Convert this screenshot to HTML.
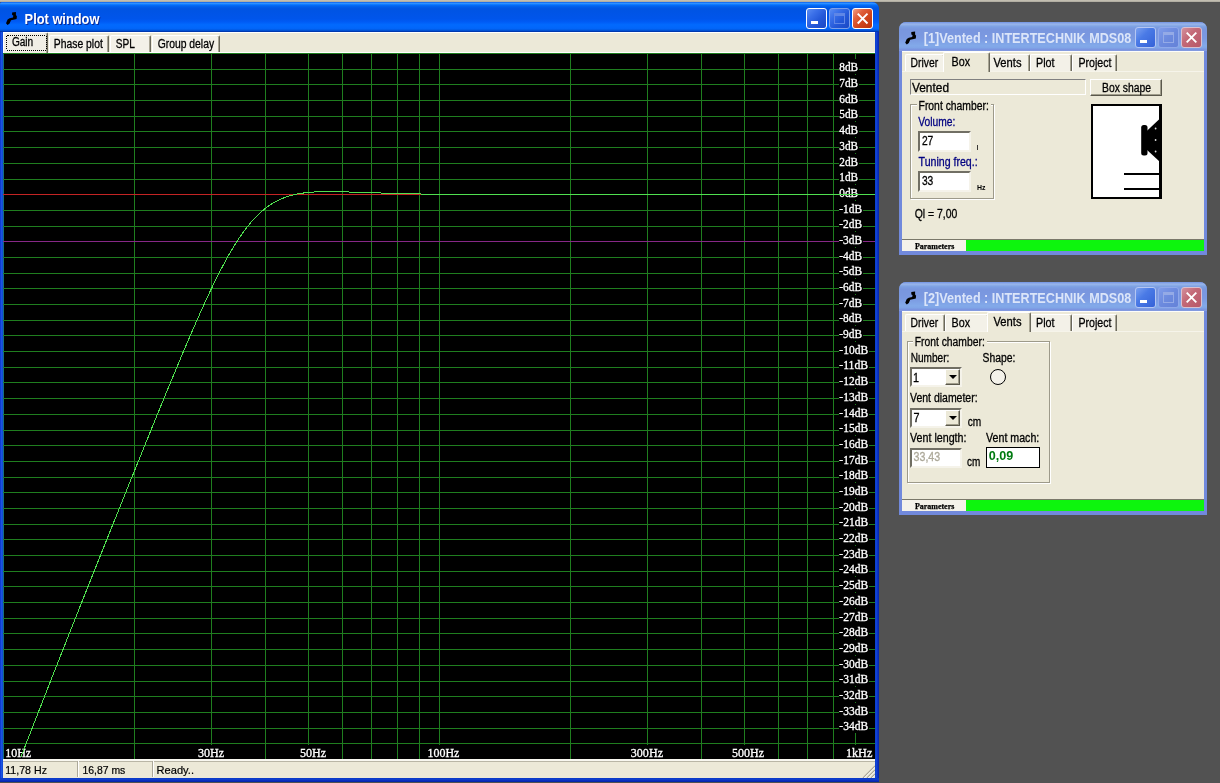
<!DOCTYPE html>
<html><head><meta charset="utf-8"><title>Plot window</title>
<style>
html,body{margin:0;padding:0;}
body{width:1220px;height:783px;overflow:hidden;background:#525252;position:relative;font-family:'Liberation Sans',sans-serif;font-size:12px;}
div{position:absolute;box-sizing:border-box;}
svg{position:absolute;left:0;top:0;will-change:transform;}
.topstrip{left:0;top:0;width:1220px;height:2px;background:linear-gradient(to bottom,#c9c5b8,#aaa79c);}
.win{background:#ece9d8;}
.tb{left:0;top:0;width:100%;border-radius:7px 7px 0 0;}
.act .tb{background:linear-gradient(to bottom,#0058ee 0%,#3593ff 4%,#288eff 6%,#127dff 8%,#036ffc 10%,#0262ee 14%,#0057e5 20%,#0054e3 24%,#0055eb 56%,#005bf5 66%,#026afe 76%,#0266fa 88%,#0058e0 94%,#0044c0 97%,#002a9a 100%);}
.ina .tb{background:linear-gradient(to bottom,#7697e7 0%,#7e9ee3 3%,#94afe8 6%,#97b4e9 8%,#82a5e4 14%,#7c9fe2 17%,#7996de 25%,#7b99e1 56%,#82a9e9 81%,#80a5e7 89%,#7b96e1 94%,#7a93df 97%,#8ea2e0 100%);}
.btn{width:21px;height:21px;border-radius:3px;border:1px solid #fff;}
.act .bmin,.act .bmax{background:radial-gradient(circle at 90% 90%,#0054e9 0%,#2263d5 55%,#4479e4 70%,#a3bbec 90%,#fff 100%);background:linear-gradient(135deg,#5b8df2 0%,#3a6fe8 30%,#2458d8 60%,#1b48c4 100%);}
.act .bclose{background:linear-gradient(135deg,#f0a088 0%,#e0603c 30%,#d0441c 60%,#b8320c 100%);}
.ina .bmin{background:linear-gradient(135deg,#7ba0f0 0%,#4a7ae6 40%,#3562d8 100%);border-color:#b4c6f3;}
.ina .bmax{background:linear-gradient(135deg,#7f9cea 0%,#6c8ade 50%,#6482d8 100%);border-color:#8fa8ea;}
.ina .bclose{background:linear-gradient(135deg,#d4909c 0%,#c46a78 40%,#b85868 100%);border-color:#d8c0d0;}
.tab{background:#f3f1e8;border-top:1px solid #fff;border-left:1px solid #fff;border-right:1px solid #6a685c;box-shadow:inset -1px 0 0 #a9a695;border-radius:2px 2px 0 0;}
.sunk{border:1px solid;border-color:#808080 #fff #fff #808080;}
.edit{background:#fff;border:2px solid;border-color:#716f64 #f5f3ea #f5f3ea #716f64;}
.grp{border:1px solid #9d9a8a;box-shadow:1px 1px 0 #fff, inset 1px 1px 0 #fff;}
</style></head><body>
<div class="topstrip"></div>

<div class="win act" style="left:0;top:2px;width:879px;height:780px;border-radius:2px 7px 0 0;background:#0b3fdb;">
<div class="tb" style="height:30px;border-radius:2px 7px 0 0;"></div>
<div style="left:0;top:30px;width:3px;height:750px;background:linear-gradient(to right,#0a2fd0,#1a55e0,#0f44d2);"></div>
<div style="left:875px;top:30px;width:4px;height:750px;background:linear-gradient(to right,#0c3ccc,#1046d6,#0a30c4,#0626a8);"></div>
<div style="left:0;top:776px;width:879px;height:4px;background:linear-gradient(to bottom,#0b38c6,#0d3ecc,#092cbc,#0524a2);"></div>
<div style="left:3px;top:30px;width:872px;height:746px;background:#ece9d8;"></div>
<div class="btn bmin" style="left:806px;top:6px;"></div>
<div class="btn bmax" style="left:829px;top:6px;border-color:#7d9fe8;"></div>
<div class="btn bclose" style="left:852px;top:6px;"></div>
<div style="left:3px;top:30px;width:872px;height:1px;background:#fff;"></div>
<div class="tab" style="left:3px;top:30px;width:45px;height:21px;background:#f1efe6;"></div>
<div class="tab" style="left:49px;top:33px;width:60px;height:18px;"></div>
<div class="tab" style="left:110px;top:33px;width:41px;height:18px;"></div>
<div class="tab" style="left:152px;top:33px;width:68px;height:18px;"></div>
<div style="left:48px;top:50px;width:827px;height:1px;background:#fff;"></div>
<div style="left:3px;top:51px;width:872px;height:706px;background:#000;"></div>
<div style="left:3px;top:757px;width:872px;height:19px;background:#ece9d8;border-top:2px solid #f8f7f0;"></div>
<div style="left:3px;top:759px;width:872px;height:1px;background:#b9b6a6;"></div>
<svg width="14" height="14" style="left:861px;top:762px;" viewBox="0 0 14 14"><path d="M2,14 L14,2 M6,14 L14,6 M10,14 L14,10" stroke="#aca899" stroke-width="1.3" fill="none"/><path d="M3.2,14 L14,3.2 M7.2,14 L14,7.2 M11.2,14 L14,11.2" stroke="#fff" stroke-width="0.8" fill="none"/></svg>
<div style="left:77px;top:759px;width:2px;height:16px;border-left:1px solid #aca899;border-right:1px solid #fff;"></div>
<div style="left:152px;top:759px;width:2px;height:16px;border-left:1px solid #aca899;border-right:1px solid #fff;"></div>
</div>
<svg width="1220" height="783" viewBox="0 0 1220 783" shape-rendering="crispEdges">
<rect x="3" y="53" width="1" height="706" fill="#16707c"/>
<rect x="134" y="53" width="1" height="706" fill="#1f7e1f"/>
<rect x="211" y="53" width="1" height="706" fill="#1f7e1f"/>
<rect x="265" y="53" width="1" height="706" fill="#1f7e1f"/>
<rect x="308" y="53" width="1" height="706" fill="#1f7e1f"/>
<rect x="342" y="53" width="1" height="706" fill="#1f7e1f"/>
<rect x="371" y="53" width="1" height="706" fill="#1f7e1f"/>
<rect x="397" y="53" width="1" height="706" fill="#1f7e1f"/>
<rect x="419" y="53" width="1" height="706" fill="#1f7e1f"/>
<rect x="439" y="53" width="1" height="706" fill="#1f7e1f"/>
<rect x="570" y="53" width="1" height="706" fill="#1f7e1f"/>
<rect x="647" y="53" width="1" height="706" fill="#1f7e1f"/>
<rect x="701" y="53" width="1" height="706" fill="#1f7e1f"/>
<rect x="744" y="53" width="1" height="706" fill="#1f7e1f"/>
<rect x="778" y="53" width="1" height="706" fill="#1f7e1f"/>
<rect x="807" y="53" width="1" height="706" fill="#1f7e1f"/>
<rect x="833" y="53" width="1" height="706" fill="#1f7e1f"/>
<rect x="855" y="53" width="1" height="706" fill="#1f7e1f"/>
<rect x="3" y="53" width="872" height="1" fill="#1f7e1f"/>
<rect x="3" y="69" width="872" height="1" fill="#1f7e1f"/>
<rect x="3" y="84" width="872" height="1" fill="#1f7e1f"/>
<rect x="3" y="100" width="872" height="1" fill="#1f7e1f"/>
<rect x="3" y="116" width="872" height="1" fill="#1f7e1f"/>
<rect x="3" y="131" width="872" height="1" fill="#1f7e1f"/>
<rect x="3" y="147" width="872" height="1" fill="#1f7e1f"/>
<rect x="3" y="163" width="872" height="1" fill="#1f7e1f"/>
<rect x="3" y="179" width="872" height="1" fill="#1f7e1f"/>
<rect x="3" y="194" width="872" height="1" fill="#c42424"/>
<rect x="3" y="210" width="872" height="1" fill="#1f7e1f"/>
<rect x="3" y="226" width="872" height="1" fill="#1f7e1f"/>
<rect x="3" y="241" width="872" height="1" fill="#872887"/>
<rect x="3" y="257" width="872" height="1" fill="#1f7e1f"/>
<rect x="3" y="273" width="872" height="1" fill="#1f7e1f"/>
<rect x="3" y="288" width="872" height="1" fill="#1f7e1f"/>
<rect x="3" y="304" width="872" height="1" fill="#1f7e1f"/>
<rect x="3" y="320" width="872" height="1" fill="#1f7e1f"/>
<rect x="3" y="335" width="872" height="1" fill="#1f7e1f"/>
<rect x="3" y="351" width="872" height="1" fill="#1f7e1f"/>
<rect x="3" y="367" width="872" height="1" fill="#1f7e1f"/>
<rect x="3" y="382" width="872" height="1" fill="#1f7e1f"/>
<rect x="3" y="398" width="872" height="1" fill="#1f7e1f"/>
<rect x="3" y="414" width="872" height="1" fill="#1f7e1f"/>
<rect x="3" y="430" width="872" height="1" fill="#1f7e1f"/>
<rect x="3" y="445" width="872" height="1" fill="#1f7e1f"/>
<rect x="3" y="461" width="872" height="1" fill="#1f7e1f"/>
<rect x="3" y="477" width="872" height="1" fill="#1f7e1f"/>
<rect x="3" y="492" width="872" height="1" fill="#1f7e1f"/>
<rect x="3" y="508" width="872" height="1" fill="#1f7e1f"/>
<rect x="3" y="524" width="872" height="1" fill="#1f7e1f"/>
<rect x="3" y="539" width="872" height="1" fill="#1f7e1f"/>
<rect x="3" y="555" width="872" height="1" fill="#1f7e1f"/>
<rect x="3" y="571" width="872" height="1" fill="#1f7e1f"/>
<rect x="3" y="586" width="872" height="1" fill="#1f7e1f"/>
<rect x="3" y="602" width="872" height="1" fill="#1f7e1f"/>
<rect x="3" y="618" width="872" height="1" fill="#1f7e1f"/>
<rect x="3" y="633" width="872" height="1" fill="#1f7e1f"/>
<rect x="3" y="649" width="872" height="1" fill="#1f7e1f"/>
<rect x="3" y="665" width="872" height="1" fill="#1f7e1f"/>
<rect x="3" y="681" width="872" height="1" fill="#1f7e1f"/>
<rect x="3" y="696" width="872" height="1" fill="#1f7e1f"/>
<rect x="3" y="712" width="872" height="1" fill="#1f7e1f"/>
<rect x="3" y="728" width="872" height="1" fill="#1f7e1f"/>
<rect x="3" y="743" width="872" height="1" fill="#1f7e1f"/>
<rect x="839" y="59" width="20" height="15" fill="#000"/>
<rect x="839" y="75" width="20" height="15" fill="#000"/>
<rect x="839" y="91" width="20" height="15" fill="#000"/>
<rect x="839" y="106" width="20" height="15" fill="#000"/>
<rect x="839" y="122" width="20" height="15" fill="#000"/>
<rect x="839" y="138" width="20" height="15" fill="#000"/>
<rect x="839" y="154" width="20" height="15" fill="#000"/>
<rect x="839" y="169" width="20" height="15" fill="#000"/>
<rect x="839" y="185" width="20" height="15" fill="#000"/>
<rect x="839" y="201" width="24" height="15" fill="#000"/>
<rect x="839" y="216" width="24" height="15" fill="#000"/>
<rect x="839" y="232" width="24" height="15" fill="#000"/>
<rect x="839" y="248" width="24" height="15" fill="#000"/>
<rect x="839" y="263" width="24" height="15" fill="#000"/>
<rect x="839" y="279" width="24" height="15" fill="#000"/>
<rect x="839" y="295" width="24" height="15" fill="#000"/>
<rect x="839" y="310" width="24" height="15" fill="#000"/>
<rect x="839" y="326" width="24" height="15" fill="#000"/>
<rect x="839" y="342" width="30" height="15" fill="#000"/>
<rect x="839" y="357" width="30" height="15" fill="#000"/>
<rect x="839" y="373" width="30" height="15" fill="#000"/>
<rect x="839" y="389" width="30" height="15" fill="#000"/>
<rect x="839" y="405" width="30" height="15" fill="#000"/>
<rect x="839" y="420" width="30" height="15" fill="#000"/>
<rect x="839" y="436" width="30" height="15" fill="#000"/>
<rect x="839" y="452" width="30" height="15" fill="#000"/>
<rect x="839" y="467" width="30" height="15" fill="#000"/>
<rect x="839" y="483" width="30" height="15" fill="#000"/>
<rect x="839" y="499" width="30" height="15" fill="#000"/>
<rect x="839" y="514" width="30" height="15" fill="#000"/>
<rect x="839" y="530" width="30" height="15" fill="#000"/>
<rect x="839" y="546" width="30" height="15" fill="#000"/>
<rect x="839" y="561" width="30" height="15" fill="#000"/>
<rect x="839" y="577" width="30" height="15" fill="#000"/>
<rect x="839" y="593" width="30" height="15" fill="#000"/>
<rect x="839" y="609" width="30" height="15" fill="#000"/>
<rect x="839" y="624" width="30" height="15" fill="#000"/>
<rect x="839" y="640" width="30" height="15" fill="#000"/>
<rect x="839" y="656" width="30" height="15" fill="#000"/>
<rect x="839" y="671" width="30" height="15" fill="#000"/>
<rect x="839" y="687" width="30" height="15" fill="#000"/>
<rect x="839" y="703" width="30" height="15" fill="#000"/>
<rect x="839" y="718" width="30" height="15" fill="#000"/>
<rect x="5" y="745" width="27" height="14" fill="#000"/>
<rect x="197" y="745" width="28" height="14" fill="#000"/>
<rect x="299" y="745" width="28" height="14" fill="#000"/>
<rect x="427" y="745" width="33" height="14" fill="#000"/>
<rect x="630" y="745" width="34" height="14" fill="#000"/>
<rect x="732" y="745" width="33" height="14" fill="#000"/>
<rect x="845" y="745" width="28" height="14" fill="#000"/>
<text x="839.3" y="71.0" font-family="'Liberation Serif', serif" font-size="12" fill="#fff" font-weight="normal" textLength="18.8" lengthAdjust="spacingAndGlyphs" stroke="#fff" stroke-width="0.3">8dB</text>
<text x="839.3" y="87.0" font-family="'Liberation Serif', serif" font-size="12" fill="#fff" font-weight="normal" textLength="18.8" lengthAdjust="spacingAndGlyphs" stroke="#fff" stroke-width="0.3">7dB</text>
<text x="839.3" y="103.0" font-family="'Liberation Serif', serif" font-size="12" fill="#fff" font-weight="normal" textLength="18.8" lengthAdjust="spacingAndGlyphs" stroke="#fff" stroke-width="0.3">6dB</text>
<text x="839.3" y="118.0" font-family="'Liberation Serif', serif" font-size="12" fill="#fff" font-weight="normal" textLength="18.8" lengthAdjust="spacingAndGlyphs" stroke="#fff" stroke-width="0.3">5dB</text>
<text x="839.3" y="134.0" font-family="'Liberation Serif', serif" font-size="12" fill="#fff" font-weight="normal" textLength="18.8" lengthAdjust="spacingAndGlyphs" stroke="#fff" stroke-width="0.3">4dB</text>
<text x="839.3" y="150.0" font-family="'Liberation Serif', serif" font-size="12" fill="#fff" font-weight="normal" textLength="18.8" lengthAdjust="spacingAndGlyphs" stroke="#fff" stroke-width="0.3">3dB</text>
<text x="839.3" y="166.0" font-family="'Liberation Serif', serif" font-size="12" fill="#fff" font-weight="normal" textLength="18.8" lengthAdjust="spacingAndGlyphs" stroke="#fff" stroke-width="0.3">2dB</text>
<text x="839.3" y="181.0" font-family="'Liberation Serif', serif" font-size="12" fill="#fff" font-weight="normal" textLength="18.8" lengthAdjust="spacingAndGlyphs" stroke="#fff" stroke-width="0.3">1dB</text>
<text x="839.3" y="197.0" font-family="'Liberation Serif', serif" font-size="12" fill="#fff" font-weight="normal" textLength="18.8" lengthAdjust="spacingAndGlyphs" stroke="#fff" stroke-width="0.3">0dB</text>
<text x="839.3" y="213.0" font-family="'Liberation Serif', serif" font-size="12" fill="#fff" font-weight="normal" textLength="22.8" lengthAdjust="spacingAndGlyphs" stroke="#fff" stroke-width="0.3">-1dB</text>
<text x="839.3" y="228.0" font-family="'Liberation Serif', serif" font-size="12" fill="#fff" font-weight="normal" textLength="22.8" lengthAdjust="spacingAndGlyphs" stroke="#fff" stroke-width="0.3">-2dB</text>
<text x="839.3" y="244.0" font-family="'Liberation Serif', serif" font-size="12" fill="#fff" font-weight="normal" textLength="22.8" lengthAdjust="spacingAndGlyphs" stroke="#fff" stroke-width="0.3">-3dB</text>
<text x="839.3" y="260.0" font-family="'Liberation Serif', serif" font-size="12" fill="#fff" font-weight="normal" textLength="22.8" lengthAdjust="spacingAndGlyphs" stroke="#fff" stroke-width="0.3">-4dB</text>
<text x="839.3" y="275.0" font-family="'Liberation Serif', serif" font-size="12" fill="#fff" font-weight="normal" textLength="22.8" lengthAdjust="spacingAndGlyphs" stroke="#fff" stroke-width="0.3">-5dB</text>
<text x="839.3" y="291.0" font-family="'Liberation Serif', serif" font-size="12" fill="#fff" font-weight="normal" textLength="22.8" lengthAdjust="spacingAndGlyphs" stroke="#fff" stroke-width="0.3">-6dB</text>
<text x="839.3" y="307.0" font-family="'Liberation Serif', serif" font-size="12" fill="#fff" font-weight="normal" textLength="22.8" lengthAdjust="spacingAndGlyphs" stroke="#fff" stroke-width="0.3">-7dB</text>
<text x="839.3" y="322.0" font-family="'Liberation Serif', serif" font-size="12" fill="#fff" font-weight="normal" textLength="22.8" lengthAdjust="spacingAndGlyphs" stroke="#fff" stroke-width="0.3">-8dB</text>
<text x="839.3" y="338.0" font-family="'Liberation Serif', serif" font-size="12" fill="#fff" font-weight="normal" textLength="22.8" lengthAdjust="spacingAndGlyphs" stroke="#fff" stroke-width="0.3">-9dB</text>
<text x="839.3" y="354.0" font-family="'Liberation Serif', serif" font-size="12" fill="#fff" font-weight="normal" textLength="28.8" lengthAdjust="spacingAndGlyphs" stroke="#fff" stroke-width="0.3">-10dB</text>
<text x="839.3" y="369.0" font-family="'Liberation Serif', serif" font-size="12" fill="#fff" font-weight="normal" textLength="28.8" lengthAdjust="spacingAndGlyphs" stroke="#fff" stroke-width="0.3">-11dB</text>
<text x="839.3" y="385.0" font-family="'Liberation Serif', serif" font-size="12" fill="#fff" font-weight="normal" textLength="28.8" lengthAdjust="spacingAndGlyphs" stroke="#fff" stroke-width="0.3">-12dB</text>
<text x="839.3" y="401.0" font-family="'Liberation Serif', serif" font-size="12" fill="#fff" font-weight="normal" textLength="28.8" lengthAdjust="spacingAndGlyphs" stroke="#fff" stroke-width="0.3">-13dB</text>
<text x="839.3" y="417.0" font-family="'Liberation Serif', serif" font-size="12" fill="#fff" font-weight="normal" textLength="28.8" lengthAdjust="spacingAndGlyphs" stroke="#fff" stroke-width="0.3">-14dB</text>
<text x="839.3" y="432.0" font-family="'Liberation Serif', serif" font-size="12" fill="#fff" font-weight="normal" textLength="28.8" lengthAdjust="spacingAndGlyphs" stroke="#fff" stroke-width="0.3">-15dB</text>
<text x="839.3" y="448.0" font-family="'Liberation Serif', serif" font-size="12" fill="#fff" font-weight="normal" textLength="28.8" lengthAdjust="spacingAndGlyphs" stroke="#fff" stroke-width="0.3">-16dB</text>
<text x="839.3" y="464.0" font-family="'Liberation Serif', serif" font-size="12" fill="#fff" font-weight="normal" textLength="28.8" lengthAdjust="spacingAndGlyphs" stroke="#fff" stroke-width="0.3">-17dB</text>
<text x="839.3" y="479.0" font-family="'Liberation Serif', serif" font-size="12" fill="#fff" font-weight="normal" textLength="28.8" lengthAdjust="spacingAndGlyphs" stroke="#fff" stroke-width="0.3">-18dB</text>
<text x="839.3" y="495.0" font-family="'Liberation Serif', serif" font-size="12" fill="#fff" font-weight="normal" textLength="28.8" lengthAdjust="spacingAndGlyphs" stroke="#fff" stroke-width="0.3">-19dB</text>
<text x="839.3" y="511.0" font-family="'Liberation Serif', serif" font-size="12" fill="#fff" font-weight="normal" textLength="28.8" lengthAdjust="spacingAndGlyphs" stroke="#fff" stroke-width="0.3">-20dB</text>
<text x="839.3" y="526.0" font-family="'Liberation Serif', serif" font-size="12" fill="#fff" font-weight="normal" textLength="28.8" lengthAdjust="spacingAndGlyphs" stroke="#fff" stroke-width="0.3">-21dB</text>
<text x="839.3" y="542.0" font-family="'Liberation Serif', serif" font-size="12" fill="#fff" font-weight="normal" textLength="28.8" lengthAdjust="spacingAndGlyphs" stroke="#fff" stroke-width="0.3">-22dB</text>
<text x="839.3" y="558.0" font-family="'Liberation Serif', serif" font-size="12" fill="#fff" font-weight="normal" textLength="28.8" lengthAdjust="spacingAndGlyphs" stroke="#fff" stroke-width="0.3">-23dB</text>
<text x="839.3" y="573.0" font-family="'Liberation Serif', serif" font-size="12" fill="#fff" font-weight="normal" textLength="28.8" lengthAdjust="spacingAndGlyphs" stroke="#fff" stroke-width="0.3">-24dB</text>
<text x="839.3" y="589.0" font-family="'Liberation Serif', serif" font-size="12" fill="#fff" font-weight="normal" textLength="28.8" lengthAdjust="spacingAndGlyphs" stroke="#fff" stroke-width="0.3">-25dB</text>
<text x="839.3" y="605.0" font-family="'Liberation Serif', serif" font-size="12" fill="#fff" font-weight="normal" textLength="28.8" lengthAdjust="spacingAndGlyphs" stroke="#fff" stroke-width="0.3">-26dB</text>
<text x="839.3" y="621.0" font-family="'Liberation Serif', serif" font-size="12" fill="#fff" font-weight="normal" textLength="28.8" lengthAdjust="spacingAndGlyphs" stroke="#fff" stroke-width="0.3">-27dB</text>
<text x="839.3" y="636.0" font-family="'Liberation Serif', serif" font-size="12" fill="#fff" font-weight="normal" textLength="28.8" lengthAdjust="spacingAndGlyphs" stroke="#fff" stroke-width="0.3">-28dB</text>
<text x="839.3" y="652.0" font-family="'Liberation Serif', serif" font-size="12" fill="#fff" font-weight="normal" textLength="28.8" lengthAdjust="spacingAndGlyphs" stroke="#fff" stroke-width="0.3">-29dB</text>
<text x="839.3" y="668.0" font-family="'Liberation Serif', serif" font-size="12" fill="#fff" font-weight="normal" textLength="28.8" lengthAdjust="spacingAndGlyphs" stroke="#fff" stroke-width="0.3">-30dB</text>
<text x="839.3" y="683.0" font-family="'Liberation Serif', serif" font-size="12" fill="#fff" font-weight="normal" textLength="28.8" lengthAdjust="spacingAndGlyphs" stroke="#fff" stroke-width="0.3">-31dB</text>
<text x="839.3" y="699.0" font-family="'Liberation Serif', serif" font-size="12" fill="#fff" font-weight="normal" textLength="28.8" lengthAdjust="spacingAndGlyphs" stroke="#fff" stroke-width="0.3">-32dB</text>
<text x="839.3" y="715.0" font-family="'Liberation Serif', serif" font-size="12" fill="#fff" font-weight="normal" textLength="28.8" lengthAdjust="spacingAndGlyphs" stroke="#fff" stroke-width="0.3">-33dB</text>
<text x="839.3" y="730.0" font-family="'Liberation Serif', serif" font-size="12" fill="#fff" font-weight="normal" textLength="28.8" lengthAdjust="spacingAndGlyphs" stroke="#fff" stroke-width="0.3">-34dB</text>
<text x="5.2" y="757.0" font-family="'Liberation Serif', serif" font-size="12" fill="#fff" font-weight="normal" textLength="26.0" lengthAdjust="spacingAndGlyphs" stroke="#fff" stroke-width="0.3">10Hz</text>
<text x="197.9" y="757.0" font-family="'Liberation Serif', serif" font-size="12" fill="#fff" font-weight="normal" textLength="26.2" lengthAdjust="spacingAndGlyphs" stroke="#fff" stroke-width="0.3">30Hz</text>
<text x="299.9" y="757.0" font-family="'Liberation Serif', serif" font-size="12" fill="#fff" font-weight="normal" textLength="26.2" lengthAdjust="spacingAndGlyphs" stroke="#fff" stroke-width="0.3">50Hz</text>
<text x="427.5" y="757.0" font-family="'Liberation Serif', serif" font-size="12" fill="#fff" font-weight="normal" textLength="31.8" lengthAdjust="spacingAndGlyphs" stroke="#fff" stroke-width="0.3">100Hz</text>
<text x="630.8" y="757.0" font-family="'Liberation Serif', serif" font-size="12" fill="#fff" font-weight="normal" textLength="32.2" lengthAdjust="spacingAndGlyphs" stroke="#fff" stroke-width="0.3">300Hz</text>
<text x="732.1" y="757.0" font-family="'Liberation Serif', serif" font-size="12" fill="#fff" font-weight="normal" textLength="31.9" lengthAdjust="spacingAndGlyphs" stroke="#fff" stroke-width="0.3">500Hz</text>
<text x="845.9" y="757.0" font-family="'Liberation Serif', serif" font-size="12" fill="#fff" font-weight="normal" textLength="26.5" lengthAdjust="spacingAndGlyphs" stroke="#fff" stroke-width="0.3">1kHz</text>
<path d="M21.0,756.9 L22.0,754.3 L23.0,751.8 L24.0,749.2 L25.0,746.6 L26.0,744.0 L27.0,741.4 L28.0,738.9 L29.0,736.3 L30.0,733.7 L31.0,731.1 L32.0,728.6 L33.0,726.0 L34.0,723.4 L35.0,720.9 L36.0,718.3 L37.0,715.7 L38.0,713.2 L39.0,710.6 L40.0,708.1 L41.0,705.5 L42.0,702.9 L43.0,700.4 L44.0,697.8 L45.0,695.3 L46.0,692.7 L47.0,690.2 L48.0,687.6 L49.0,685.1 L50.0,682.5 L51.0,680.0 L52.0,677.4 L53.0,674.9 L54.0,672.3 L55.0,669.8 L56.0,667.3 L57.0,664.7 L58.0,662.2 L59.0,659.7 L60.0,657.1 L61.0,654.6 L62.0,652.0 L63.0,649.5 L64.0,647.0 L65.0,644.5 L66.0,641.9 L67.0,639.4 L68.0,636.9 L69.0,634.3 L70.0,631.8 L71.0,629.3 L72.0,626.8 L73.0,624.3 L74.0,621.7 L75.0,619.2 L76.0,616.7 L77.0,614.2 L78.0,611.7 L79.0,609.1 L80.0,606.6 L81.0,604.1 L82.0,601.6 L83.0,599.1 L84.0,596.6 L85.0,594.1 L86.0,591.6 L87.0,589.1 L88.0,586.6 L89.0,584.0 L90.0,581.5 L91.0,579.0 L92.0,576.5 L93.0,574.0 L94.0,571.5 L95.0,569.0 L96.0,566.5 L97.0,564.0 L98.0,561.5 L99.0,559.0 L100.0,556.5 L101.0,554.0 L102.0,551.5 L103.0,549.0 L104.0,546.5 L105.0,544.0 L106.0,541.6 L107.0,539.1 L108.0,536.6 L109.0,534.1 L110.0,531.6 L111.0,529.1 L112.0,526.6 L113.0,524.1 L114.0,521.6 L115.0,519.1 L116.0,516.7 L117.0,514.2 L118.0,511.7 L119.0,509.2 L120.0,506.7 L121.0,504.2 L122.0,501.8 L123.0,499.3 L124.0,496.8 L125.0,494.3 L126.0,491.8 L127.0,489.4 L128.0,486.9 L129.0,484.4 L130.0,481.9 L131.0,479.4 L132.0,477.0 L133.0,474.5 L134.0,472.0 L135.0,469.5 L136.0,467.1 L137.0,464.6 L138.0,462.1 L139.0,459.7 L140.0,457.2 L141.0,454.7 L142.0,452.3 L143.0,449.8 L144.0,447.3 L145.0,444.9 L146.0,442.4 L147.0,439.9 L148.0,437.5 L149.0,435.0 L150.0,432.6 L151.0,430.1 L152.0,427.6 L153.0,425.2 L154.0,422.7 L155.0,420.3 L156.0,417.8 L157.0,415.4 L158.0,412.9 L159.0,410.5 L160.0,408.1 L161.0,405.6 L162.0,403.2 L163.0,400.7 L164.0,398.3 L165.0,395.9 L166.0,393.4 L167.0,391.0 L168.0,388.6 L169.0,386.2 L170.0,383.8 L171.0,381.3 L172.0,378.9 L173.0,376.5 L174.0,374.1 L175.0,371.7 L176.0,369.3 L177.0,366.9 L178.0,364.5 L179.0,362.1 L180.0,359.8 L181.0,357.4 L182.0,355.0 L183.0,352.6 L184.0,350.3 L185.0,347.9 L186.0,345.6 L187.0,343.2 L188.0,340.9 L189.0,338.6 L190.0,336.2 L191.0,333.9 L192.0,331.6 L193.0,329.3 L194.0,327.0 L195.0,324.7 L196.0,322.4 L197.0,320.2 L198.0,317.9 L199.0,315.7 L200.0,313.4 L201.0,311.2 L202.0,309.0 L203.0,306.8 L204.0,304.6 L205.0,302.4 L206.0,300.2 L207.0,298.0 L208.0,295.9 L209.0,293.8 L210.0,291.6 L211.0,289.5 L212.0,287.5 L213.0,285.4 L214.0,283.3 L215.0,281.3 L216.0,279.2 L217.0,277.2 L218.0,275.2 L219.0,273.3 L220.0,271.3 L221.0,269.4 L222.0,267.5 L223.0,265.6 L224.0,263.7 L225.0,261.8 L226.0,260.0 L227.0,258.2 L228.0,256.4 L229.0,254.6 L230.0,252.9 L231.0,251.2 L232.0,249.5 L233.0,247.8 L234.0,246.2 L235.0,244.6 L236.0,243.0 L237.0,241.4 L238.0,239.8 L239.0,238.3 L240.0,236.8 L241.0,235.4 L242.0,233.9 L243.0,232.5 L244.0,231.2 L245.0,229.8 L246.0,228.5 L247.0,227.2 L248.0,225.9 L249.0,224.7 L250.0,223.5 L251.0,222.3 L252.0,221.1 L253.0,220.0 L254.0,218.9 L255.0,217.8 L256.0,216.8 L257.0,215.8 L258.0,214.8 L259.0,213.8 L260.0,212.9 L261.0,212.0 L262.0,211.1 L263.0,210.3 L264.0,209.4 L265.0,208.6 L266.0,207.9 L267.0,207.1 L268.0,206.4 L269.0,205.7 L270.0,205.0 L271.0,204.4 L272.0,203.7 L273.0,203.1 L274.0,202.5 L275.0,202.0 L276.0,201.4 L277.0,200.9 L278.0,200.4 L279.0,199.9 L280.0,199.5 L281.0,199.0 L282.0,198.6 L283.0,198.2 L284.0,197.8 L285.0,197.4 L286.0,197.1 L287.0,196.7 L288.0,196.4 L289.0,196.1 L290.0,195.8 L291.0,195.5 L292.0,195.2 L293.0,195.0 L294.0,194.7 L295.0,194.5 L296.0,194.3 L297.0,194.1 L298.0,193.9 L299.0,193.7 L300.0,193.5 L301.0,193.4 L302.0,193.2 L303.0,193.1 L304.0,192.9 L305.0,192.8 L306.0,192.7 L307.0,192.6 L308.0,192.5 L309.0,192.4 L310.0,192.3 L311.0,192.2 L312.0,192.1 L313.0,192.0 L314.0,192.0 L315.0,191.9 L316.0,191.9 L317.0,191.8" fill="none" stroke="#50e050" stroke-width="1"/>
<rect x="317" y="191" width="32" height="1" fill="#50e050"/>
<rect x="349" y="192" width="32" height="1" fill="#50e050"/>
<rect x="381" y="193" width="40" height="1" fill="#50e050"/>
<rect x="421" y="194" width="454" height="1" fill="#50e050"/>
</svg>
<div class="win ina" style="left:899px;top:22px;width:308px;height:233px;border-radius:7px 7px 0 0;background:#7189dc;">
<div class="tb" style="height:29px;"></div>
<div style="left:3px;top:29px;width:302px;height:200px;background:#ece9d8;border-top:1px solid #fdfdfa;"></div>
<div class="btn bmin" style="left:236px;top:5px;"></div>
<div class="btn bmax" style="left:259px;top:5px;"></div>
<div class="btn bclose" style="left:282px;top:5px;"></div>
<div style="left:3px;top:49px;width:302px;height:1px;background:#f6f4ea;"></div>
<div class="tab" style="left:6px;top:32px;width:40px;height:17px;"></div>
<div class="tab" style="left:44px;top:30px;width:47px;height:20px;background:#ece9d8;z-index:2;"></div>
<div class="tab" style="left:90px;top:32px;width:41px;height:17px;"></div>
<div class="tab" style="left:131px;top:32px;width:42px;height:17px;"></div>
<div class="tab" style="left:173px;top:32px;width:45px;height:17px;"></div>
<div style="left:3px;top:217px;width:302px;height:1px;background:#7a786a;"></div>
<div style="left:3px;top:218px;width:302px;height:11px;background:#f4f2ea;"></div>
<div style="left:67px;top:218px;width:238px;height:11px;background:#0df50d;"></div>
<div class="sunk" style="left:11px;top:57px;width:176px;height:16px;"></div>
<div style="left:191px;top:57px;width:72px;height:17px;border:1px solid;border-color:#fff #5a584c #5a584c #fff;box-shadow:inset -1px -1px 0 #a09d8c;background:#ece9d8;"></div>
<div class="grp" style="left:11px;top:82px;width:84px;height:95px;"></div>
<div style="left:18px;top:78px;width:74px;height:10px;background:#ece9d8;"></div>
<div class="edit" style="left:19px;top:109px;width:53px;height:21px;"></div>
<div class="edit" style="left:19px;top:149px;width:53px;height:21px;"></div>
<div style="left:192px;top:82px;width:71px;height:95px;background:#fff;border:2px solid #000;border-right-width:3px;"></div>
</div>
<div class="win ina" style="left:899px;top:282px;width:308px;height:233px;border-radius:7px 7px 0 0;background:#7189dc;">
<div class="tb" style="height:29px;"></div>
<div style="left:3px;top:29px;width:302px;height:200px;background:#ece9d8;border-top:1px solid #fdfdfa;"></div>
<div class="btn bmin" style="left:236px;top:5px;"></div>
<div class="btn bmax" style="left:259px;top:5px;"></div>
<div class="btn bclose" style="left:282px;top:5px;"></div>
<div style="left:3px;top:49px;width:302px;height:1px;background:#f6f4ea;"></div>
<div class="tab" style="left:6px;top:32px;width:40px;height:17px;"></div>
<div class="tab" style="left:46px;top:32px;width:44px;height:17px;"></div>
<div class="tab" style="left:88px;top:30px;width:44px;height:20px;background:#ece9d8;z-index:2;"></div>
<div class="tab" style="left:131px;top:32px;width:42px;height:17px;"></div>
<div class="tab" style="left:173px;top:32px;width:45px;height:17px;"></div>
<div style="left:3px;top:217px;width:302px;height:1px;background:#7a786a;"></div>
<div style="left:3px;top:218px;width:302px;height:11px;background:#f4f2ea;"></div>
<div style="left:67px;top:218px;width:238px;height:11px;background:#0df50d;"></div>
<div class="grp" style="left:8px;top:59px;width:143px;height:142px;"></div>
<div style="left:14px;top:55px;width:74px;height:10px;background:#ece9d8;"></div>
<div class="edit" style="left:11px;top:85px;width:52px;height:20px;"></div>
<div style="left:46px;top:87px;width:15px;height:16px;background:#ece9d8;border:1px solid;border-color:#fff #5a584c #5a584c #fff;box-shadow:inset -1px -1px 0 #a09d8c;"></div>
<div style="left:50px;top:93px;width:0;height:0;border-left:4px solid transparent;border-right:4px solid transparent;border-top:4px solid #000;"></div>
<div class="edit" style="left:11px;top:126px;width:52px;height:20px;"></div>
<div style="left:46px;top:128px;width:15px;height:16px;background:#ece9d8;border:1px solid;border-color:#fff #5a584c #5a584c #fff;box-shadow:inset -1px -1px 0 #a09d8c;"></div>
<div style="left:50px;top:134px;width:0;height:0;border-left:4px solid transparent;border-right:4px solid transparent;border-top:4px solid #000;"></div>
<div style="left:91px;top:87px;width:16px;height:16px;border-radius:50%;border:1px solid #000;background:#f4f2ea;"></div>
<div class="edit" style="left:11px;top:166px;width:52px;height:20px;"></div>
<div style="left:87px;top:165px;width:54px;height:21px;background:#fff;border:1px solid #000;"></div>
</div>
<svg width="1220" height="783" viewBox="0 0 1220 783" style="z-index:5">
<polygon fill="#000" points="12.1,12.5 15.9,12.0 15.9,15.0 16.9,16.3 16.6,19.0 14.6,19.6 11.0,20.3 9.6,23.6 7.6,24.9 6.0,23.3 7.6,19.6 9.6,18.3 13.0,17.6 13.3,15.6 12.1,15.0"/>
<rect x="6.5" y="35.5" width="40" height="15" rx="1.5" fill="none" stroke="#000" stroke-width="1" stroke-dasharray="1 1" shape-rendering="crispEdges"/>
<text x="25.6" y="25.0" font-family="'Liberation Sans', sans-serif" font-size="14" fill="#0a2a9a" font-weight="bold" textLength="74.8" lengthAdjust="spacingAndGlyphs">Plot window</text>
<text x="24.6" y="24.0" font-family="'Liberation Sans', sans-serif" font-size="14" fill="#fff" font-weight="bold" textLength="74.8" lengthAdjust="spacingAndGlyphs">Plot window</text>
<text x="11.9" y="46.0" font-family="'Liberation Sans', sans-serif" font-size="12.5" fill="#000" font-weight="normal" textLength="21.3" lengthAdjust="spacingAndGlyphs" stroke="#000" stroke-width="0.3">Gain</text>
<text x="53.8" y="48.0" font-family="'Liberation Sans', sans-serif" font-size="12.5" fill="#000" font-weight="normal" textLength="49.0" lengthAdjust="spacingAndGlyphs" stroke="#000" stroke-width="0.3">Phase plot</text>
<text x="115.7" y="48.0" font-family="'Liberation Sans', sans-serif" font-size="12.5" fill="#000" font-weight="normal" textLength="19.1" lengthAdjust="spacingAndGlyphs" stroke="#000" stroke-width="0.3">SPL</text>
<text x="157.7" y="48.0" font-family="'Liberation Sans', sans-serif" font-size="12.5" fill="#000" font-weight="normal" textLength="56.4" lengthAdjust="spacingAndGlyphs" stroke="#000" stroke-width="0.3">Group delay</text>
<text x="5.2" y="774.0" font-family="'Liberation Sans', sans-serif" font-size="11" fill="#000" font-weight="normal" textLength="41.8" lengthAdjust="spacingAndGlyphs" stroke="#000" stroke-width="0.2">11,78 Hz</text>
<text x="82.4" y="774.0" font-family="'Liberation Sans', sans-serif" font-size="11" fill="#000" font-weight="normal" textLength="42.9" lengthAdjust="spacingAndGlyphs" stroke="#000" stroke-width="0.2">16,87 ms</text>
<text x="156.6" y="774.0" font-family="'Liberation Sans', sans-serif" font-size="11" fill="#000" font-weight="normal" textLength="37.4" lengthAdjust="spacingAndGlyphs" stroke="#000" stroke-width="0.2">Ready..</text>
<rect x="811" y="21" width="7" height="3" fill="#fff"/>
<rect x="834.5" y="13.5" width="10" height="10" fill="none" stroke="#5f86e6" stroke-width="1"/><rect x="834" y="13" width="11" height="3" fill="#5f86e6"/>
<path d="M857.7,13.7 L867.5,23.5 M867.5,13.7 L857.7,23.5" stroke="#fff" stroke-width="1.9" fill="none"/>
<polygon fill="#000" points="911.3,32.0 915.1,31.5 915.1,34.5 916.1,35.8 915.8,38.5 913.8,39.1 910.2,39.8 908.8,43.1 906.8,44.4 905.2,42.8 906.8,39.1 908.8,37.8 912.2,37.1 912.5,35.1 911.3,34.5"/>
<text x="923.8" y="43.2" font-family="'Liberation Sans', sans-serif" font-size="14" fill="#dbe5f9" font-weight="bold" textLength="207.5" lengthAdjust="spacingAndGlyphs">[1]Vented : INTERTECHNIK MDS08</text>
<rect x="1140" y="40" width="7" height="3" fill="#fff"/>
<rect x="1163.5" y="32.5" width="10" height="10" fill="none" stroke="#94aae6" stroke-width="1"/><rect x="1163" y="32" width="11" height="3" fill="#94aae6"/>
<path d="M1186.7,32.7 L1196.3,42.3 M1196.3,32.7 L1186.7,42.3" stroke="#fff" stroke-width="1.9" fill="none"/>
<text x="910.5" y="67.0" font-family="'Liberation Sans', sans-serif" font-size="12.5" fill="#000" font-weight="normal" textLength="27.6" lengthAdjust="spacingAndGlyphs" stroke="#000" stroke-width="0.3">Driver</text>
<text x="951.5" y="66.0" font-family="'Liberation Sans', sans-serif" font-size="12.5" fill="#000" font-weight="normal" textLength="18.5" lengthAdjust="spacingAndGlyphs" stroke="#000" stroke-width="0.3">Box</text>
<text x="993.5" y="67.0" font-family="'Liberation Sans', sans-serif" font-size="12.5" fill="#000" font-weight="normal" textLength="28.0" lengthAdjust="spacingAndGlyphs" stroke="#000" stroke-width="0.3">Vents</text>
<text x="1036.0" y="67.0" font-family="'Liberation Sans', sans-serif" font-size="12.5" fill="#000" font-weight="normal" textLength="18.5" lengthAdjust="spacingAndGlyphs" stroke="#000" stroke-width="0.3">Plot</text>
<text x="1078.5" y="67.0" font-family="'Liberation Sans', sans-serif" font-size="12.5" fill="#000" font-weight="normal" textLength="33.0" lengthAdjust="spacingAndGlyphs" stroke="#000" stroke-width="0.3">Project</text>
<text x="914.9" y="249.0" font-family="'Liberation Serif', serif" font-size="8.5" fill="#000" font-weight="bold" textLength="39.4" lengthAdjust="spacingAndGlyphs" stroke="#000" stroke-width="0.25">Parameters</text>
<polygon fill="#000" points="911.3,292.0 915.1,291.5 915.1,294.5 916.1,295.8 915.8,298.5 913.8,299.1 910.2,299.8 908.8,303.1 906.8,304.4 905.2,302.8 906.8,299.1 908.8,297.8 912.2,297.1 912.5,295.1 911.3,294.5"/>
<text x="923.8" y="303.2" font-family="'Liberation Sans', sans-serif" font-size="14" fill="#dbe5f9" font-weight="bold" textLength="207.5" lengthAdjust="spacingAndGlyphs">[2]Vented : INTERTECHNIK MDS08</text>
<rect x="1140" y="300" width="7" height="3" fill="#fff"/>
<rect x="1163.5" y="292.5" width="10" height="10" fill="none" stroke="#94aae6" stroke-width="1"/><rect x="1163" y="292" width="11" height="3" fill="#94aae6"/>
<path d="M1186.7,292.7 L1196.3,302.3 M1196.3,292.7 L1186.7,302.3" stroke="#fff" stroke-width="1.9" fill="none"/>
<text x="910.5" y="327.0" font-family="'Liberation Sans', sans-serif" font-size="12.5" fill="#000" font-weight="normal" textLength="27.6" lengthAdjust="spacingAndGlyphs" stroke="#000" stroke-width="0.3">Driver</text>
<text x="951.5" y="327.0" font-family="'Liberation Sans', sans-serif" font-size="12.5" fill="#000" font-weight="normal" textLength="18.5" lengthAdjust="spacingAndGlyphs" stroke="#000" stroke-width="0.3">Box</text>
<text x="993.5" y="326.0" font-family="'Liberation Sans', sans-serif" font-size="12.5" fill="#000" font-weight="normal" textLength="28.0" lengthAdjust="spacingAndGlyphs" stroke="#000" stroke-width="0.3">Vents</text>
<text x="1036.0" y="327.0" font-family="'Liberation Sans', sans-serif" font-size="12.5" fill="#000" font-weight="normal" textLength="18.5" lengthAdjust="spacingAndGlyphs" stroke="#000" stroke-width="0.3">Plot</text>
<text x="1078.5" y="327.0" font-family="'Liberation Sans', sans-serif" font-size="12.5" fill="#000" font-weight="normal" textLength="33.0" lengthAdjust="spacingAndGlyphs" stroke="#000" stroke-width="0.3">Project</text>
<text x="914.9" y="509.0" font-family="'Liberation Serif', serif" font-size="8.5" fill="#000" font-weight="bold" textLength="39.4" lengthAdjust="spacingAndGlyphs" stroke="#000" stroke-width="0.25">Parameters</text>
<text x="912.0" y="92.0" font-family="'Liberation Sans', sans-serif" font-size="12.5" fill="#000" font-weight="normal" textLength="37.0" lengthAdjust="spacingAndGlyphs" stroke="#000" stroke-width="0.3">Vented</text>
<text x="1102.0" y="92.0" font-family="'Liberation Sans', sans-serif" font-size="12.5" fill="#000" font-weight="normal" textLength="49.0" lengthAdjust="spacingAndGlyphs" stroke="#000" stroke-width="0.3">Box shape</text>
<text x="918.6" y="110.0" font-family="'Liberation Sans', sans-serif" font-size="12.5" fill="#000" font-weight="normal" textLength="70.2" lengthAdjust="spacingAndGlyphs" stroke="#000" stroke-width="0.3">Front chamber:</text>
<text x="918.3" y="126.0" font-family="'Liberation Sans', sans-serif" font-size="12.5" fill="#000080" font-weight="normal" textLength="37.0" lengthAdjust="spacingAndGlyphs" stroke="#000080" stroke-width="0.3">Volume:</text>
<text x="918.6" y="166.0" font-family="'Liberation Sans', sans-serif" font-size="12.5" fill="#000080" font-weight="normal" textLength="59.0" lengthAdjust="spacingAndGlyphs" stroke="#000080" stroke-width="0.3">Tuning freq.:</text>
<text x="921.9" y="145.0" font-family="'Liberation Sans', sans-serif" font-size="12.5" fill="#000" font-weight="normal" textLength="11.4" lengthAdjust="spacingAndGlyphs" stroke="#000" stroke-width="0.3">27</text>
<text x="921.9" y="185.0" font-family="'Liberation Sans', sans-serif" font-size="12.5" fill="#000" font-weight="normal" textLength="11.4" lengthAdjust="spacingAndGlyphs" stroke="#000" stroke-width="0.3">33</text>
<text x="976.8" y="149.5" font-family="'Liberation Sans', sans-serif" font-size="8" fill="#000" font-weight="bold" textLength="1.6" lengthAdjust="spacingAndGlyphs">l</text>
<text x="977.0" y="189.5" font-family="'Liberation Sans', sans-serif" font-size="7" fill="#000" font-weight="bold" textLength="8.5" lengthAdjust="spacingAndGlyphs">Hz</text>
<text x="914.7" y="218.0" font-family="'Liberation Sans', sans-serif" font-size="12.5" fill="#000" font-weight="normal" textLength="42.6" lengthAdjust="spacingAndGlyphs" stroke="#000" stroke-width="0.3">Ql = 7,00</text>
<rect x="1141.2" y="125" width="6.3" height="30.5" rx="2.5" fill="#000"/>
<polygon points="1146.5,131.2 1159.5,119 1159.5,161.6 1146.5,149.5" fill="#000"/>
<circle cx="1155.6" cy="128.5" r="0.9" fill="#ddd"/>
<circle cx="1155.6" cy="140" r="0.9" fill="#ddd"/>
<circle cx="1155.6" cy="151.5" r="0.9" fill="#ddd"/>
<rect x="1124" y="173" width="36" height="2" fill="#000"/><rect x="1124" y="188" width="36" height="2" fill="#000"/>
<text x="914.7" y="346.0" font-family="'Liberation Sans', sans-serif" font-size="12.5" fill="#000" font-weight="normal" textLength="70.1" lengthAdjust="spacingAndGlyphs" stroke="#000" stroke-width="0.3">Front chamber:</text>
<text x="910.7" y="362.0" font-family="'Liberation Sans', sans-serif" font-size="12.5" fill="#000" font-weight="normal" textLength="38.7" lengthAdjust="spacingAndGlyphs" stroke="#000" stroke-width="0.3">Number:</text>
<text x="982.6" y="362.0" font-family="'Liberation Sans', sans-serif" font-size="12.5" fill="#000" font-weight="normal" textLength="32.8" lengthAdjust="spacingAndGlyphs" stroke="#000" stroke-width="0.3">Shape:</text>
<text x="913.0" y="381.5" font-family="'Liberation Sans', sans-serif" font-size="12.5" fill="#000" font-weight="normal" textLength="6.0" lengthAdjust="spacingAndGlyphs" stroke="#000" stroke-width="0.3">1</text>
<text x="910.0" y="402.0" font-family="'Liberation Sans', sans-serif" font-size="12.5" fill="#000" font-weight="normal" textLength="67.6" lengthAdjust="spacingAndGlyphs" stroke="#000" stroke-width="0.3">Vent diameter:</text>
<text x="913.5" y="422.0" font-family="'Liberation Sans', sans-serif" font-size="12.5" fill="#000" font-weight="normal" textLength="6.0" lengthAdjust="spacingAndGlyphs" stroke="#000" stroke-width="0.3">7</text>
<text x="967.8" y="426.0" font-family="'Liberation Sans', sans-serif" font-size="12.5" fill="#000" font-weight="normal" textLength="13.5" lengthAdjust="spacingAndGlyphs" stroke="#000" stroke-width="0.3">cm</text>
<text x="910.0" y="442.0" font-family="'Liberation Sans', sans-serif" font-size="12.5" fill="#000" font-weight="normal" textLength="56.5" lengthAdjust="spacingAndGlyphs" stroke="#000" stroke-width="0.3">Vent length:</text>
<text x="986.1" y="442.0" font-family="'Liberation Sans', sans-serif" font-size="12.5" fill="#000" font-weight="normal" textLength="53.2" lengthAdjust="spacingAndGlyphs" stroke="#000" stroke-width="0.3">Vent mach:</text>
<text x="913.6" y="461.0" font-family="'Liberation Sans', sans-serif" font-size="12.5" fill="#aca899" font-weight="normal" textLength="26.6" lengthAdjust="spacingAndGlyphs" stroke="#aca899" stroke-width="0.3">33,43</text>
<text x="966.9" y="465.5" font-family="'Liberation Sans', sans-serif" font-size="12.5" fill="#000" font-weight="normal" textLength="13.3" lengthAdjust="spacingAndGlyphs" stroke="#000" stroke-width="0.3">cm</text>
<text x="988.8" y="460.0" font-family="'Liberation Sans', sans-serif" font-size="12.5" fill="#007a10" font-weight="bold" textLength="24.5" lengthAdjust="spacingAndGlyphs">0,09</text>
</svg>
</body></html>
